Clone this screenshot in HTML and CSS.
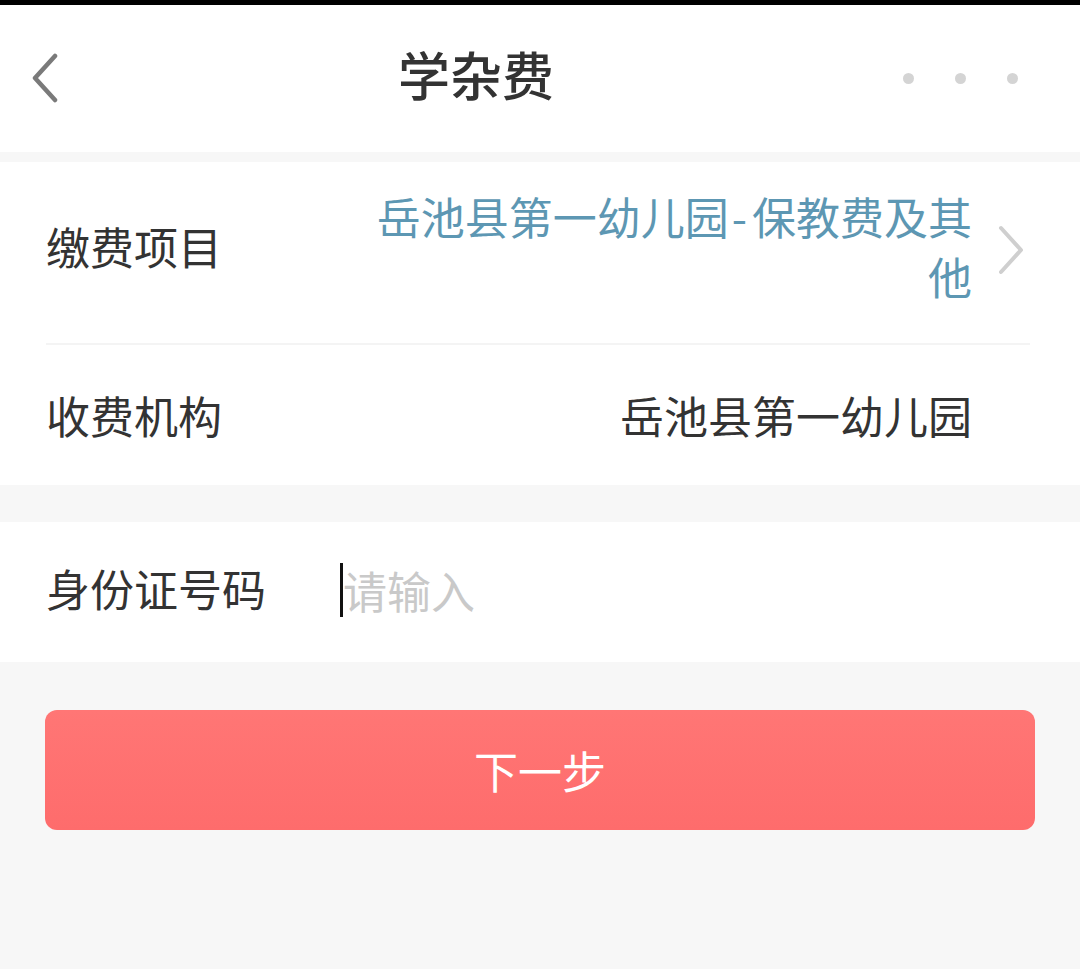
FILE: index.html
```html
<!DOCTYPE html>
<html lang="zh-CN">
<head>
<meta charset="utf-8">
<title>学杂费</title>
<link rel="stylesheet" href="styles.css">
</head>
<body>
<div class="statusbar"></div>
<header class="navbar">
  <svg class="back" width="30" height="50" viewBox="0 0 30 50"><polyline points="25,3 5,25 25,47" fill="none" stroke="#7a7a7a" stroke-width="4.5" stroke-linecap="round" stroke-linejoin="round"/></svg>
  <h1 class="title">学杂费</h1>
  <div class="more"><span></span><span></span><span></span></div>
</header>
<section class="group first">
  <div class="row tall">
    <div class="label">缴费项目</div>
    <div class="value link">岳池县第一幼儿园<span class="dash">-</span>保教费及其他</div>
    <svg class="arrow" width="30" height="50" viewBox="0 0 30 50"><polyline points="5,3 25,25 5,47" fill="none" stroke="#cfcfcf" stroke-width="4" stroke-linecap="round" stroke-linejoin="round"/></svg>
  </div>
  <div class="divider"></div>
  <div class="row">
    <div class="label">收费机构</div>
    <div class="value plain">岳池县第一幼儿园</div>
  </div>
</section>
<section class="group second">
  <div class="row input-row">
    <div class="label">身份证号码</div>
    <div class="input"><span class="caret"></span><span class="placeholder">请输入</span></div>
  </div>
</section>
<div class="actions">
  <button class="next">下一步</button>
</div>
</body>
</html>
```

FILE: styles.css
```css
* { box-sizing: border-box; }
html, body { margin: 0; padding: 0; }
body {
  background: #f7f7f7;
  font-family: "Noto Sans CJK SC", "Noto Sans", sans-serif;
  color: #333;
  width: 1080px;
  height: 969px;
  overflow: hidden;
}
.statusbar { height: 5px; background: #000; }
.navbar {
  height: 147px;
  background: #fff;
  display: flex;
  align-items: center;
  justify-content: space-between;
  padding: 0 62px 0 30px;
  position: relative;
}
.back { display: block; margin-top: -2px; }
.title {
  position: absolute;
  left: 0; right: 0; top: 0; bottom: 0;
  margin: 0;
  display: flex;
  align-items: center;
  justify-content: center;
  padding-right: 128px;
  padding-bottom: 10px;
  font-size: 52px;
  font-weight: 500;
  color: #333;
  line-height: 1;
}
.more { display: flex; gap: 41px; margin-top: 0; }
.more span { width: 11px; height: 11px; border-radius: 50%; background: #d4d4d4; display: block; }
.group { background: #fff; }
.group.first { margin-top: 10px; }
.group.second { margin-top: 37px; }
.row {
  display: flex;
  align-items: center;
  padding: 0 54px 0 46px;
  height: 140px;
  font-size: 44px;
}
.row.tall { height: 181px; padding-bottom: 14px; }
.label { color: #333; flex: none; }
.value { margin-left: auto; text-align: right; }
.value.link {
  color: #5d97b3;
  width: 612px;
  line-height: 60px;
}
.dash { padding: 0 5px 0 3px; }
.value.plain { color: #333; margin-right: 54px; }
.arrow { flex: none; margin-left: 24px; margin-top: 8px; }
.divider { height: 2px; background: #f4f4f4; margin: 0 50px 0 46px; }
.input-row { height: 140px; padding-bottom: 8px; }
.input { display: flex; align-items: center; margin-left: 74px; margin-top: 4px; }
.caret { width: 3px; height: 54px; background: #111; display: block; }
.placeholder { color: #c9c9c9; }
.actions { padding: 48px 45px 0 45px; }
.next {
  display: block;
  width: 100%;
  height: 120px;
  border: none;
  border-radius: 12px;
  background: linear-gradient(180deg, #ff7675 0%, #fe6c6c 100%);
  color: #fff;
  font-family: "Noto Sans CJK SC", sans-serif;
  font-size: 44px;
  padding: 0;
}
```
